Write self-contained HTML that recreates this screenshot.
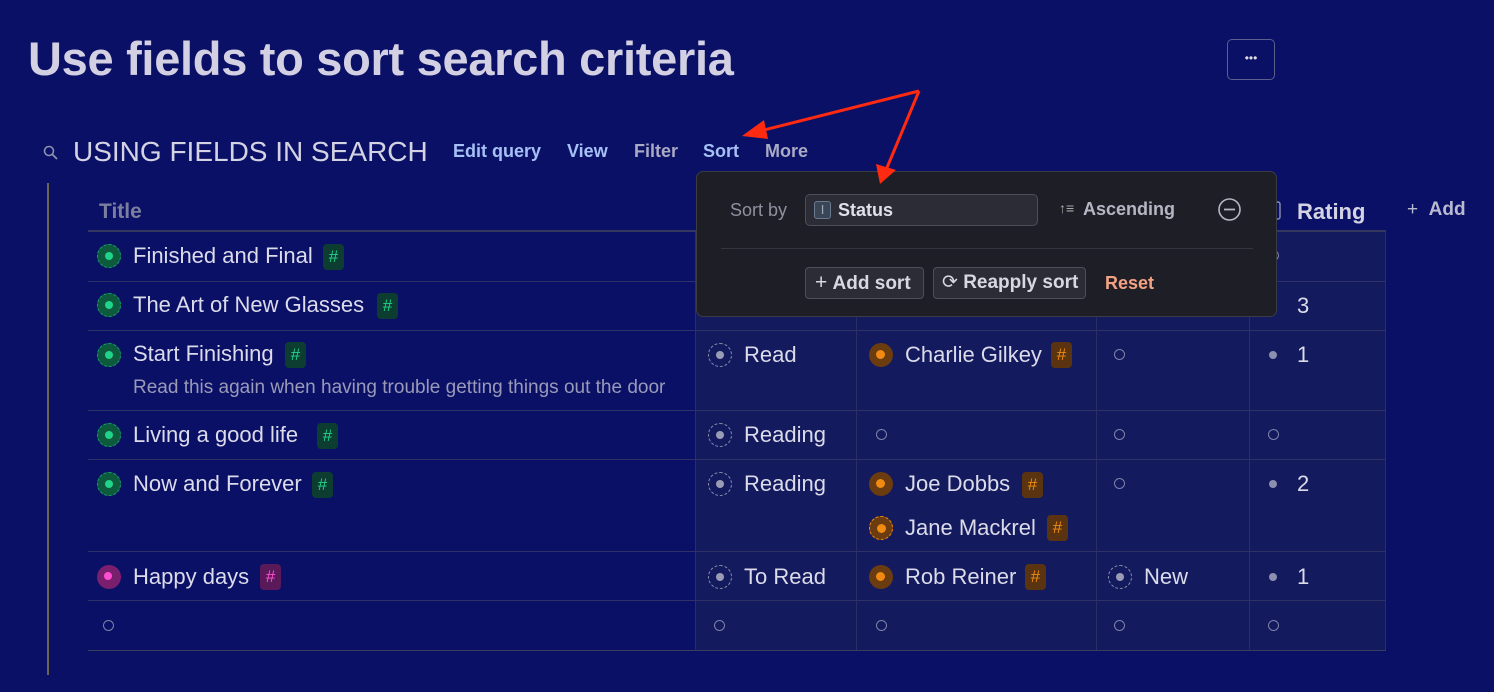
<!DOCTYPE html>
<html><head><meta charset="utf-8"><style>
*{box-sizing:border-box;margin:0;padding:0}
body{width:1494px;height:692px;background:#0a1066;font-family:"Liberation Sans",sans-serif;color:#d4d3e3;position:relative;overflow:hidden}
.abs{position:absolute}
h1{position:absolute;left:28px;top:31px;font-size:47px;font-weight:bold;color:#d2d0e2;letter-spacing:-0.3px;white-space:nowrap}
.dots{left:1227px;top:39px;width:48px;height:41px;border:1px solid #5b5f8a;border-radius:5px;text-align:center;line-height:36px;font-size:12px;color:#ddd}
.q{top:136px;font-size:28px;color:#d4d3e3;left:73px}
.lnk{top:141px;font-size:18px;font-weight:bold}
.vline{left:47px;top:183px;width:2px;height:492px;background:#6b6650}
.cell{position:absolute;border-bottom:1px solid #2f3266}
.col{position:absolute;background:#131a5e;border-left:1px solid #2a2e60}
.t{position:absolute;font-size:22px;color:#dcdbea;white-space:nowrap}
.sub{position:absolute;font-size:19px;color:#9a9ab8;white-space:nowrap}
.gd{position:absolute;width:24px;height:24px;border-radius:50%;background:#0d5a3c;border:1px dashed #16a06a}
.gd::after{content:"";position:absolute;left:7px;top:7px;width:8px;height:8px;border-radius:50%;background:#1fd38a}
.pd{position:absolute;width:24px;height:24px;border-radius:50%;background:#7a1f6e}
.pd::after{content:"";position:absolute;left:7px;top:7px;width:8px;height:8px;border-radius:50%;background:#ff4fd0}
.od{position:absolute;width:24px;height:24px;border-radius:50%;background:#6a3c10}
.od::after{content:"";position:absolute;left:7px;top:7px;width:9px;height:9px;border-radius:50%;background:#f08a10}
.sd{position:absolute;width:24px;height:24px;border-radius:50%;border:1px dashed #8a8cab}
.sd::after{content:"";position:absolute;left:7px;top:7px;width:8px;height:8px;border-radius:50%;background:#9a9bb5}
.ec{position:absolute;width:11px;height:11px;border-radius:50%;border:1.5px solid #7f82a8}
.fd{position:absolute;width:8px;height:8px;border-radius:50%;background:#8d8fae}
.hg,.ho,.hp{position:absolute;width:21px;height:26px;border-radius:4px;font-size:17px;text-align:center;line-height:26px}
.hg{background:#0c3d30;color:#1fd38a}
.ho{background:#5a3410;color:#f08a10}
.hp{background:#5a1a5a;color:#ff4fd0}
.pop{left:696px;top:171px;width:581px;height:146px;background:#1e1f26;border:1px solid #3a3b44;border-radius:7px}
.btn{position:absolute;border:1px solid #4d4e58;background:#2b2c35;border-radius:4px;height:32px;font-size:19px;font-weight:bold;color:#d8d8e0;line-height:30px;white-space:nowrap}
</style></head><body>
<h1>Use fields to sort search criteria</h1>
<div class="abs dots">•••</div>

<svg class="abs" style="left:42px;top:144px" width="18" height="18" viewBox="0 0 18 18"><circle cx="7" cy="7" r="4.5" fill="none" stroke="#8d8fae" stroke-width="1.6"/><line x1="10.5" y1="10.5" x2="15" y2="15" stroke="#8d8fae" stroke-width="1.8"/></svg>
<div class="abs q">USING FIELDS IN SEARCH</div>
<div class="abs lnk" style="left:453px;color:#a6c0f5">Edit query</div>
<div class="abs lnk" style="left:567px;color:#a6c0f5">View</div>
<div class="abs lnk" style="left:634px;color:#a9aac4">Filter</div>
<div class="abs lnk" style="left:703px;color:#a6c0f5">Sort</div>
<div class="abs lnk" style="left:765px;color:#a9aac4">More</div>
<div class="abs vline"></div>

<div class="col" style="left:695px;top:231px;width:691px;height:419px;border-right:1px solid #2a2e60"></div>
<div class="abs" style="left:856px;top:231px;width:1px;height:419px;background:#2a2e60"></div>
<div class="abs" style="left:1096px;top:231px;width:1px;height:419px;background:#2a2e60"></div>
<div class="abs" style="left:1249px;top:231px;width:1px;height:419px;background:#2a2e60"></div>

<div class="abs" style="left:99px;top:200px;font-size:21px;font-weight:bold;color:#7c7e9e">Title</div>
<div class="abs" style="left:88px;top:230px;width:1298px;height:2px;background:#34375e"></div>
<svg class="abs" style="left:1268px;top:201px" width="14" height="20"><rect x="1" y="1" width="11" height="17" rx="2" fill="none" stroke="#8d8fae" stroke-width="1.4"/></svg>
<div class="abs" style="left:1297px;top:199px;font-size:22px;font-weight:bold;color:#d4d3e3">Rating</div>
<div class="abs" style="left:1407px;top:199px;font-size:19px;color:#b9bad0">+&nbsp; <b>Add</b></div>

<div class="cell" style="left:88px;top:231px;width:1298px;height:51px"></div>
<div class="cell" style="left:88px;top:282px;width:1298px;height:49px"></div>
<div class="cell" style="left:88px;top:331px;width:1298px;height:80px"></div>
<div class="cell" style="left:88px;top:411px;width:1298px;height:49px"></div>
<div class="cell" style="left:88px;top:460px;width:1298px;height:92px"></div>
<div class="cell" style="left:88px;top:552px;width:1298px;height:49px"></div>
<div class="cell" style="left:88px;top:601px;width:1298px;height:50px;border-bottom:1px solid #3a3d5e"></div>

<div class="gd" style="left:97px;top:244px"></div><div class="t" style="left:133px;top:243px">Finished and Final</div><div class="hg" style="left:323px;top:244px">#</div>
<div class="ec" style="left:1268px;top:250px"></div>
<div class="gd" style="left:97px;top:293px"></div><div class="t" style="left:133px;top:292px">The Art of New Glasses</div><div class="hg" style="left:377px;top:293px">#</div>
<div class="t" style="left:1297px;top:293px">3</div>
<div class="gd" style="left:97px;top:343px"></div><div class="t" style="left:133px;top:341px">Start Finishing</div><div class="hg" style="left:285px;top:342px">#</div>
<div class="sub" style="left:133px;top:377px">Read this again when having trouble getting things out the door</div>
<div class="sd" style="left:708px;top:343px"></div><div class="t" style="left:744px;top:342px">Read</div>
<div class="od" style="left:869px;top:343px"></div><div class="t" style="left:905px;top:342px">Charlie Gilkey</div><div class="ho" style="left:1051px;top:342px">#</div>
<div class="ec" style="left:1114px;top:349px"></div>
<div class="fd" style="left:1269px;top:351px"></div><div class="t" style="left:1297px;top:342px">1</div>
<div class="gd" style="left:97px;top:423px"></div><div class="t" style="left:133px;top:422px">Living a good life</div><div class="hg" style="left:317px;top:423px">#</div>
<div class="sd" style="left:708px;top:423px"></div><div class="t" style="left:744px;top:422px">Reading</div>
<div class="ec" style="left:876px;top:429px"></div><div class="ec" style="left:1114px;top:429px"></div><div class="ec" style="left:1268px;top:429px"></div>
<div class="gd" style="left:97px;top:472px"></div><div class="t" style="left:133px;top:471px">Now and Forever</div><div class="hg" style="left:312px;top:472px">#</div>
<div class="sd" style="left:708px;top:472px"></div><div class="t" style="left:744px;top:471px">Reading</div>
<div class="od" style="left:869px;top:472px"></div><div class="t" style="left:905px;top:471px">Joe Dobbs</div><div class="ho" style="left:1022px;top:472px">#</div>
<div class="od" style="left:869px;top:516px;border:1px dashed #f08a10"></div><div class="t" style="left:905px;top:515px">Jane Mackrel</div><div class="ho" style="left:1047px;top:515px">#</div>
<div class="ec" style="left:1114px;top:478px"></div>
<div class="fd" style="left:1269px;top:480px"></div><div class="t" style="left:1297px;top:471px">2</div>
<div class="pd" style="left:97px;top:565px"></div><div class="t" style="left:133px;top:564px">Happy days</div><div class="hp" style="left:260px;top:564px">#</div>
<div class="sd" style="left:708px;top:565px"></div><div class="t" style="left:744px;top:564px">To Read</div>
<div class="od" style="left:869px;top:565px"></div><div class="t" style="left:905px;top:564px">Rob Reiner</div><div class="ho" style="left:1025px;top:564px">#</div>
<div class="sd" style="left:1108px;top:565px"></div><div class="t" style="left:1144px;top:564px">New</div>
<div class="fd" style="left:1269px;top:573px"></div><div class="t" style="left:1297px;top:564px">1</div>
<div class="ec" style="left:103px;top:620px"></div><div class="ec" style="left:714px;top:620px"></div><div class="ec" style="left:876px;top:620px"></div><div class="ec" style="left:1114px;top:620px"></div><div class="ec" style="left:1268px;top:620px"></div>

<div class="abs pop">
 <div class="abs" style="left:33px;top:28px;font-size:18px;color:#8f909f">Sort by</div>
 <div class="abs" style="left:108px;top:22px;width:233px;height:32px;border:1px solid #4d4e58;background:#2b2c35;border-radius:5px">
  <div class="abs" style="left:8px;top:6px;width:17px;height:18px;border:1.5px solid #6a7a90;border-radius:3px;background:#3a4556;color:#9ab;font-size:13px;text-align:center;line-height:15px">I</div>
  <div class="abs" style="left:32px;top:5px;font-size:18px;font-weight:bold;color:#e0e0e8">Status</div>
 </div>
 <div class="abs" style="left:362px;top:28px;font-size:14px;color:#aaa;font-weight:bold">↑≡</div>
 <div class="abs" style="left:386px;top:27px;font-size:18px;font-weight:bold;color:#b5b6c4">Ascending</div>
 <svg class="abs" style="left:520px;top:25px" width="25" height="25"><circle cx="12.5" cy="12.5" r="10.5" fill="none" stroke="#b5b6c4" stroke-width="1.6"/><line x1="7" y1="12.5" x2="18" y2="12.5" stroke="#b5b6c4" stroke-width="1.8"/></svg>
 <div class="abs" style="left:24px;top:76px;width:532px;height:1px;background:#34353e"></div>
 <div class="btn" style="left:108px;top:95px;width:119px;padding-left:9px"><span style="font-weight:normal;font-size:21px">+</span>&nbsp;Add sort</div>
 <div class="btn" style="left:236px;top:95px;width:153px;padding-left:8px"><span style="font-weight:normal">⟳</span> Reapply sort</div>
 <div class="abs" style="left:408px;top:101px;font-size:18px;font-weight:bold;color:#f4a283">Reset</div>
</div>

<svg class="abs" style="left:0;top:0" width="1494" height="692">
 <g stroke="#ff2a10" stroke-width="3" fill="#ff2a10">
 <line x1="919" y1="91" x2="760" y2="131"/>
 <line x1="919" y1="91" x2="886" y2="170"/>
 </g>
 <polygon points="742,136 764,120 768,139" fill="#ff2a10"/>
 <polygon points="880,184 876,164 896,170" fill="#ff2a10"/>
</svg>
</body></html>
